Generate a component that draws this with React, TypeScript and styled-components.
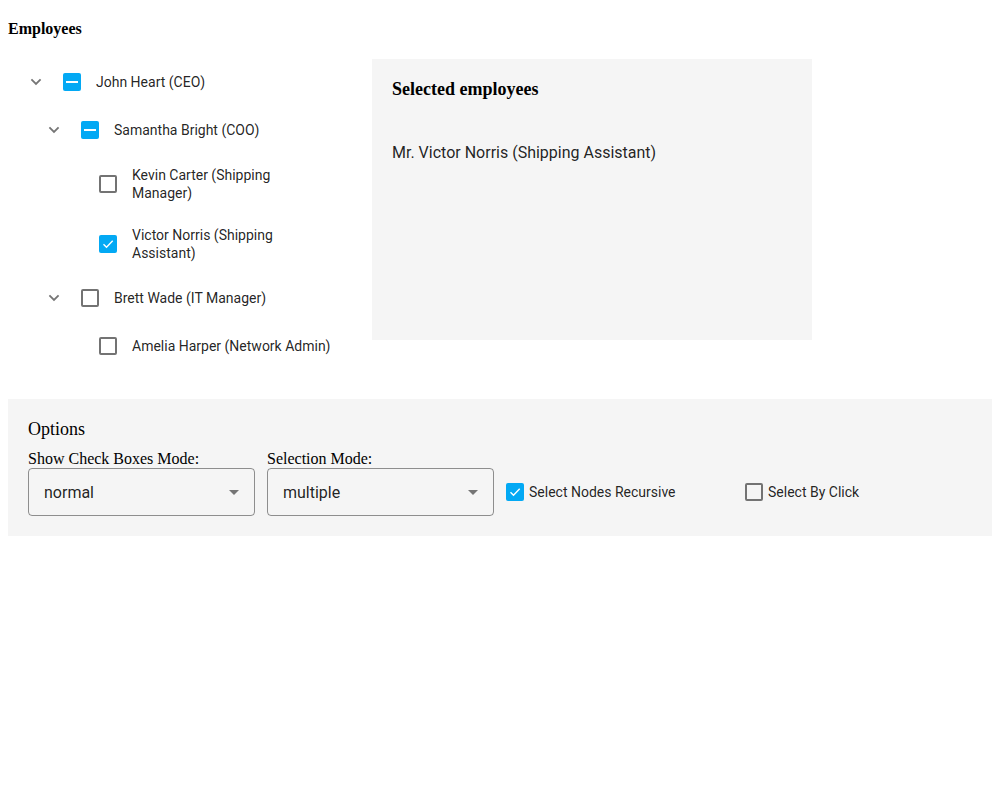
import { createGlobalStyle, styled } from "styled-components";

const GlobalStyle = createGlobalStyle`
  body {
    margin: 8px;
    font-family: "Liberation Serif", "Times New Roman", serif;
    background: #fff;
  }
`;

const BLUE = "#03a9f4";

const Title = styled.div`
  font-size: 16px;
  font-weight: bold;
  margin: 12px 0 20px;
  line-height: 18px;
`;

const Layout = styled.div`
  display: flex;
  align-items: flex-start;
  gap: 24px;
`;

const Tree = styled.ul`
  list-style: none;
  margin: 0;
  padding: 0;
  width: 340px;
  font-family: Roboto, "Liberation Sans", sans-serif;
  font-size: 14px;
  color: rgba(0, 0, 0, 0.87);
`;

const Row = styled.li<{ $level: number }>`
  display: flex;
  align-items: center;
  min-height: 48px;
  padding: 12px 16px 12px ${(p) => 16 + p.$level * 18}px;
  box-sizing: border-box;
`;

const Toggle = styled.span`
  width: 24px;
  height: 24px;
  flex: none;
  display: flex;
  align-items: center;
  justify-content: center;
  color: #757575;
`;

const Box = styled.span<{ $state: "on" | "off" | "mixed" }>`
  width: 18px;
  height: 18px;
  flex: none;
  box-sizing: border-box;
  border-radius: 2px;
  display: flex;
  align-items: center;
  justify-content: center;
  border: ${(p) => (p.$state === "off" ? "2px solid #737373" : "none")};
  background: ${(p) => (p.$state === "off" ? "transparent" : BLUE)};
`;

const Mixed = styled.span`
  width: 12px;
  height: 2px;
  background: #fff;
`;

const TreeBox = styled(Box)`
  margin: 0 15px;
`;

const Label = styled.span`
  line-height: 18px;
`;

const SelectedPanel = styled.div`
  width: 440px;
  height: 281px;
  box-sizing: border-box;
  margin-top: 1px;
  padding: 20px;
  background: #f5f5f5;
`;

const PanelHeading = styled.div`
  font-size: 18px;
  font-weight: bold;
  line-height: 21px;
  margin-bottom: 43px;
`;

const SelectedItem = styled.div`
  font-family: Roboto, "Liberation Sans", sans-serif;
  font-size: 16px;
  line-height: 19px;
  color: rgba(0, 0, 0, 0.87);
`;

const Options = styled.div`
  margin-top: 29px;
  padding: 20px;
  background: #f5f5f5;
`;

const OptionsCaption = styled.div`
  font-size: 18px;
  line-height: 21px;
  margin-bottom: 10px;
`;

const OptionsRow = styled.div`
  display: flex;
  align-items: flex-end;
  gap: 12px;
`;

const Option = styled.div`
  width: 227px;
`;

const OptionLabel = styled.div`
  font-size: 16px;
  line-height: 18px;
`;

const SelectBox = styled.div`
  height: 48px;
  box-sizing: border-box;
  border: 1px solid rgba(0, 0, 0, 0.42);
  border-radius: 4px;
  display: flex;
  align-items: center;
  justify-content: space-between;
  padding: 0 15px;
  font-family: Roboto, "Liberation Sans", sans-serif;
  font-size: 16px;
  color: rgba(0, 0, 0, 0.87);
`;

const Caret = styled.span`
  width: 0;
  height: 0;
  border-left: 5px solid transparent;
  border-right: 5px solid transparent;
  border-top: 5px solid #757575;
`;

const CheckOption = styled.label`
  width: 227px;
  height: 48px;
  display: flex;
  align-items: center;
  gap: 5px;
  font-family: Roboto, "Liberation Sans", sans-serif;
  font-size: 14px;
  color: rgba(0, 0, 0, 0.87);
`;

const Chevron = () => (
  <svg width="12" height="8" viewBox="0 0 12 8">
    <path d="M1.4 1.3 6 5.9l4.6-4.6" fill="none" stroke="currentColor" strokeWidth="1.8" />
  </svg>
);

const Tick = () => (
  <svg width="12" height="10" viewBox="0 0 12 10">
    <path d="M1.5 5.2 4.5 8.2 10.7 1.8" fill="none" stroke="#fff" strokeWidth="1.4" />
  </svg>
);

type State = "on" | "off" | "mixed";

const Check = ({ state, tree }: { state: State; tree?: boolean }) => {
  const Comp = tree ? TreeBox : Box;
  return (
    <Comp $state={state}>
      {state === "on" && <Tick />}
      {state === "mixed" && <Mixed />}
    </Comp>
  );
};

const items: { level: number; text: string; state: State; parent: boolean }[] = [
  { level: 0, text: "John Heart (CEO)", state: "mixed", parent: true },
  { level: 1, text: "Samantha Bright (COO)", state: "mixed", parent: true },
  { level: 2, text: "Kevin Carter (Shipping Manager)", state: "off", parent: false },
  { level: 2, text: "Victor Norris (Shipping Assistant)", state: "on", parent: false },
  { level: 1, text: "Brett Wade (IT Manager)", state: "off", parent: true },
  { level: 2, text: "Amelia Harper (Network Admin)", state: "off", parent: false },
];

export default function App() {
  return (
    <>
      <GlobalStyle />
      <Title>Employees</Title>
      <Layout>
        <Tree>
          {items.map((it) => (
            <Row key={it.text} $level={it.level}>
              <Toggle>{it.parent && <Chevron />}</Toggle>
              <Check state={it.state} tree />
              <Label>{it.text}</Label>
            </Row>
          ))}
        </Tree>
        <SelectedPanel>
          <PanelHeading>Selected employees</PanelHeading>
          <SelectedItem>Mr. Victor Norris (Shipping Assistant)</SelectedItem>
        </SelectedPanel>
      </Layout>
      <Options>
        <OptionsCaption>Options</OptionsCaption>
        <OptionsRow>
          <Option>
            <OptionLabel>Show Check Boxes Mode:</OptionLabel>
            <SelectBox>
              normal
              <Caret />
            </SelectBox>
          </Option>
          <Option>
            <OptionLabel>Selection Mode:</OptionLabel>
            <SelectBox>
              multiple
              <Caret />
            </SelectBox>
          </Option>
          <CheckOption>
            <Check state="on" />
            Select Nodes Recursive
          </CheckOption>
          <CheckOption>
            <Check state="off" />
            Select By Click
          </CheckOption>
        </OptionsRow>
      </Options>
    </>
  );
}
